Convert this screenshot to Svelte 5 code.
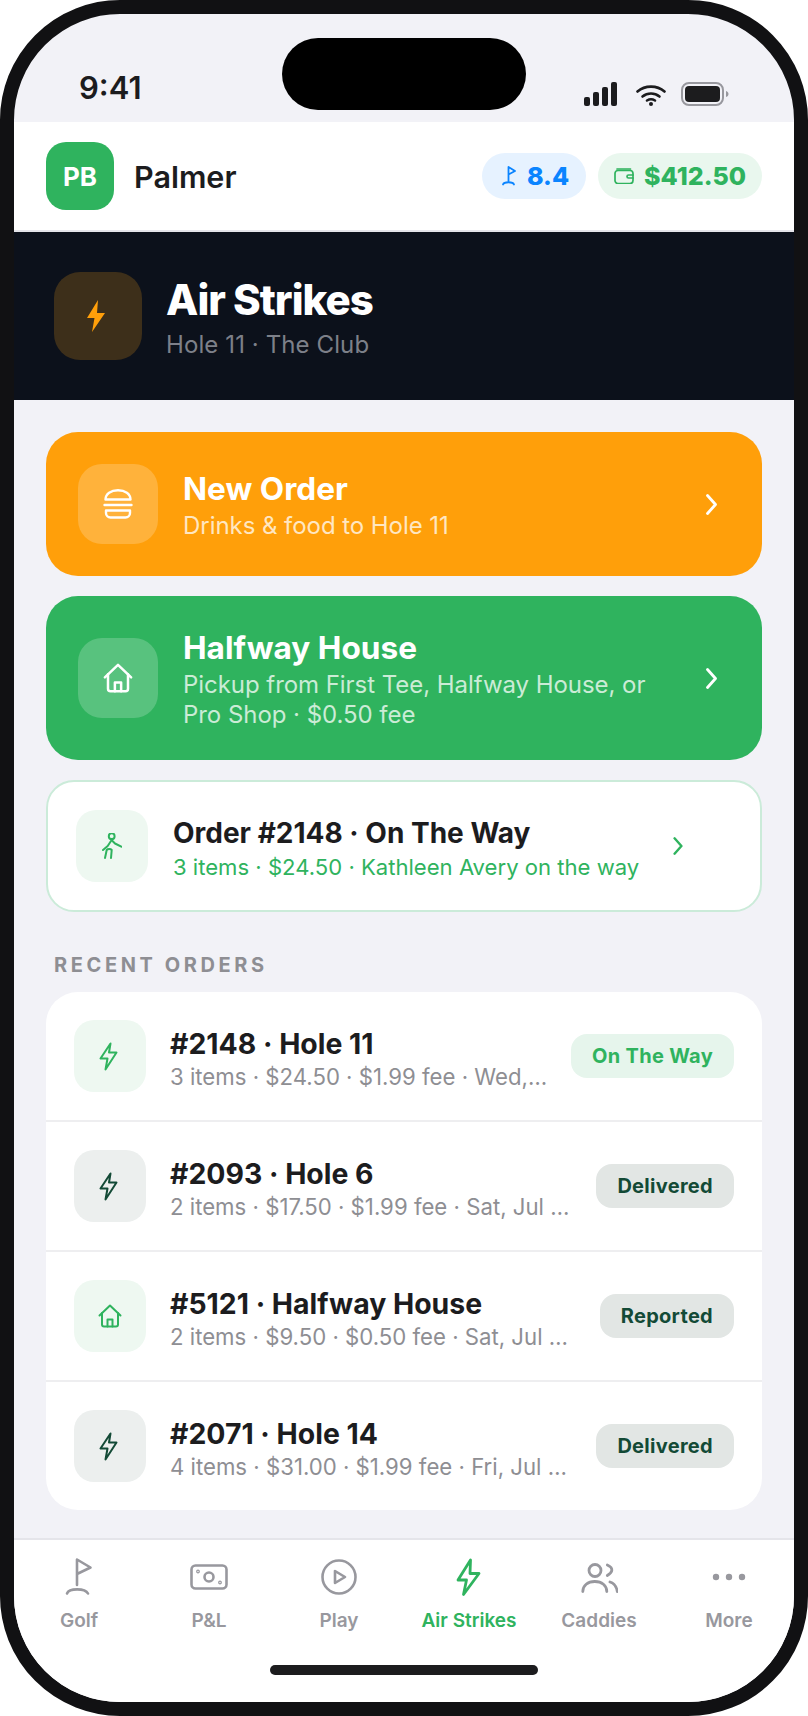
<script>
  const orders = [
    { id: '#2148 · Hole 11', meta: '3 items · $24.50 · $1.99 fee · Wed,…', status: 'On The Way', icon: 'bolt', active: true },
    { id: '#2093 · Hole 6', meta: '2 items · $17.50 · $1.99 fee · Sat, Jul …', status: 'Delivered', icon: 'bolt', active: false },
    { id: '#5121 · Halfway House', meta: '2 items · $9.50 · $0.50 fee · Sat, Jul …', status: 'Reported', icon: 'house', active: true },
    { id: '#2071 · Hole 14', meta: '4 items · $31.00 · $1.99 fee · Fri, Jul …', status: 'Delivered', icon: 'bolt', active: false }
  ];

  const tabs = [
    { label: 'Golf', icon: 'flag' },
    { label: 'P&L', icon: 'money' },
    { label: 'Play', icon: 'play' },
    { label: 'Air Strikes', icon: 'zap', active: true },
    { label: 'Caddies', icon: 'people' },
    { label: 'More', icon: 'dots' }
  ];
</script>

{#snippet house(size)}
  <svg width={size} height={size} viewBox="0 0 24 24" fill="none" stroke="currentColor" stroke-width="2" stroke-linecap="round" stroke-linejoin="round">
    <path d="M1.500 11.500 12 1.500l10.500 10" />
    <path d="M4 9v11.500a2 2 0 0 0 2 2h12a2 2 0 0 0 2-2V9" />
    <path d="M9.500 22.500V15.500h5v7" />
  </svg>
{/snippet}

{#snippet chevron(w, h)}
  <svg class="chev" width={w} height={h} viewBox="0 0 11 21" fill="none" stroke="currentColor" stroke-width="2.800" stroke-linecap="round" stroke-linejoin="round">
    <path d="M1.500 1.500 9.500 10.500 1.500 19.500" />
  </svg>
{/snippet}

<div class="phone">
  <div class="island"></div>

  <div class="status">
    <span class="time">9:41</span>
    <div class="status-icons">
      <svg width="33" height="24" viewBox="0 0 33 24" fill="#1c1c1e">
        <rect x="0" y="15" width="6" height="9" rx="2" />
        <rect x="9" y="10" width="6" height="14" rx="2" />
        <rect x="18" y="5" width="6" height="19" rx="2" />
        <rect x="27" y="0" width="6" height="24" rx="2" />
      </svg>
      <svg class="wifi" width="30" height="22" viewBox="0 0 30 22" fill="none" stroke="#1c1c1e" stroke-width="2.600" stroke-linecap="round">
        <path d="M1.500 7.500C9 1 21 1 28.500 7.500" />
        <path d="M6.500 12.500C11.500 8.500 18.500 8.500 23.500 12.500" />
        <path d="M11 16.500C13.500 15 16.500 15 19 16.500" />
        <circle cx="15" cy="20" r="2" fill="#1c1c1e" stroke="none" />
      </svg>
      <svg class="batt" width="48" height="24" viewBox="0 0 48 24">
        <rect x="1" y="1" width="41" height="22" rx="7" fill="none" stroke="#98989e" stroke-width="2" />
        <rect x="4" y="4" width="35" height="16" rx="4" fill="#1c1c1e" />
        <path d="M45 9c1.600 .5 2.500 1.500 2.500 3s-.9 2.500-2.500 3z" fill="#98989e" />
      </svg>
    </div>
  </div>

  <header class="topbar">
    <div class="avatar">PB</div>
    <span class="name">Palmer</span>
    <div class="pills">
      <div class="pill blue">
        <svg width="14" height="20" viewBox="0 0 14 20" fill="none" stroke="currentColor" stroke-width="1.800" stroke-linecap="round" stroke-linejoin="round">
          <path d="M6.500 15V1l6.500 4-6.500 3.500" />
          <path d="M1 18.500C2 15.500 11 15.500 12 18.500" />
        </svg>
        8.4
      </div>
      <div class="pill green">
        <svg width="20" height="16" viewBox="0 0 20 16" fill="none" stroke="currentColor" stroke-width="1.700" stroke-linecap="round" stroke-linejoin="round">
          <path d="M3 1h13.500" />
          <rect x="1" y="2.500" width="18" height="13" rx="3" />
          <path d="M19 7h-4.500a1.500 1.500 0 0 0 0 3H19" />
        </svg>
        $412.50
      </div>
    </div>
  </header>

  <section class="hero">
    <div class="hero-icon">
      <svg width="18" height="32" viewBox="0 0 18 32" fill="#ff9f0a">
        <path d="M11 0 0 18h7.500L5 32 18 13h-8z" />
      </svg>
    </div>
    <div class="hero-text">
      <h1>Air Strikes</h1>
      <p>Hole 11 · The Club</p>
    </div>
  </section>

  <main class="content">
    <div class="action orange">
      <div class="action-icon">
        <svg width="30" height="30" viewBox="0 0 30 30" fill="none" stroke="currentColor" stroke-width="2.400" stroke-linecap="round" stroke-linejoin="round">
          <path d="M2.500 10.500C2.500 4.500 8 1.300 15 1.300s12.500 3.200 12.500 9.200z" />
          <path d="M1.500 16h27" />
          <path d="M3 21.500h24v2.500a4.500 4.500 0 0 1-4.500 4.500h-15A4.500 4.500 0 0 1 3 24z" />
        </svg>
      </div>
      <div class="action-text">
        <div class="action-title">New Order</div>
        <div class="action-sub">Drinks &amp; food to Hole 11</div>
      </div>
      {@render chevron(11, 21)}
    </div>

    <div class="action leaf">
      <div class="action-icon">{@render house(30)}</div>
      <div class="action-text">
        <div class="action-title">Halfway House</div>
        <div class="action-sub">Pickup from First Tee, Halfway House, or<br />Pro Shop · $0.50 fee</div>
      </div>
      {@render chevron(11, 21)}
    </div>

    <div class="live">
      <div class="tile soft">
        <svg width="20" height="27" viewBox="0 0 20 27" fill="none" stroke="currentColor" stroke-width="2" stroke-linecap="round" stroke-linejoin="round">
          <circle cx="9.700" cy="3.200" r="2.900" />
          <path d="M10 6.500 5.700 13 1 17" />
          <path d="M10 7.500l3 3 6.300 3.200" />
          <path d="M3 25l1.700-8c1-1.200 4-1.200 5 0L9 25" />
        </svg>
      </div>
      <div class="live-text">
        <div class="live-title">Order #2148 · On The Way</div>
        <div class="live-sub">3 items · $24.50 · Kathleen Avery on the way</div>
      </div>
      {@render chevron(10, 18)}
    </div>

    <div class="section-label">RECENT ORDERS</div>

    <div class="orders">
      {#each orders as order}
        <div class="order">
          <div class="tile" class:soft={order.active} class:muted={!order.active}>
            {#if order.icon === 'house'}
              {@render house(24)}
            {:else}
              <svg class="bolt" width="19" height="29" viewBox="0 0 19 29" fill="none" stroke="currentColor" stroke-width="2" stroke-linejoin="round" stroke-linecap="round">
                <path d="M11.500 1.500 1.500 16.500h7L6.500 27.500 17.500 10.500h-7.500z" />
              </svg>
            {/if}
          </div>
          <div class="order-text">
            <div class="order-title">{order.id}</div>
            <div class="order-meta">{order.meta}</div>
          </div>
          <span class="badge" class:way={order.status === 'On The Way'}>{order.status}</span>
        </div>
      {/each}
    </div>
  </main>

  <nav class="tabbar">
    <div class="tabs">
      {#each tabs as tab}
        <div class="tab" class:active={tab.active}>
          <div class="tab-icon">
            {#if tab.icon === 'flag'}
              <svg width="28" height="38" viewBox="0 0 28 38" fill="none" stroke="currentColor" stroke-width="2.600" stroke-linecap="round" stroke-linejoin="round">
                <path d="M12 27V1.500l13.500 8L12 16" />
                <path d="M2 35.500C4 30 20 30 23 35.500" />
              </svg>
            {:else if tab.icon === 'money'}
              <svg width="38" height="26" viewBox="0 0 38 26" fill="none" stroke="currentColor" stroke-width="2.600" stroke-linecap="round">
                <rect x="1.500" y="1.500" width="35" height="23" rx="4" />
                <circle cx="19" cy="13" r="4.500" />
                <circle cx="8" cy="7.500" r=".6" />
                <circle cx="30" cy="18.500" r=".6" />
              </svg>
            {:else if tab.icon === 'play'}
              <svg width="36" height="36" viewBox="0 0 36 36" fill="none" stroke="currentColor" stroke-width="2.600" stroke-linejoin="round">
                <circle cx="18" cy="18" r="16.500" />
                <path d="M14 12v12l10-6z" />
              </svg>
            {:else if tab.icon === 'zap'}
              <svg width="26" height="40" viewBox="0 0 26 40" fill="none" stroke="currentColor" stroke-width="2.800" stroke-linejoin="round" stroke-linecap="round">
                <path d="M14.500 3 2 23h8.500L7.500 37.500 23 16.500H14z" />
              </svg>
            {:else if tab.icon === 'people'}
              <svg width="38" height="32" viewBox="0 0 38 32" fill="none" stroke="currentColor" stroke-width="2.800" stroke-linecap="round">
                <circle cx="15" cy="9.500" r="6" />
                <path d="M2.800 30.500c0-6 5-10 12-10s12 4 12 10" />
                <path d="M27.300 4c3.500 1.500 4.800 3.500 4.500 5.500-.3 2-2 3.500-4.500 5" />
                <path d="M30 21c3.500 1 6.500 5 7.300 9.500" />
              </svg>
            {:else}
              <svg width="34" height="8" viewBox="0 0 34 8" fill="currentColor">
                <circle cx="4" cy="4" r="3.200" />
                <circle cx="17" cy="4" r="3.200" />
                <circle cx="30" cy="4" r="3.200" />
              </svg>
            {/if}
          </div>
          <span>{tab.label}</span>
        </div>
      {/each}
    </div>
    <div class="home-bar"></div>
  </nav>
</div>

<style>
  :global(body) {
    margin: 0;
    background: #fff;
  }

  .phone {
    width: 808px;
    height: 1716px;
    box-sizing: border-box;
    border: 14px solid #111113;
    border-radius: 120px;
    overflow: hidden;
    position: relative;
    display: flex;
    flex-direction: column;
    background: #f2f2f7;
    font-family: Inter, "Noto Sans", sans-serif;
    color: #1c1c1e;
  }

  .island {
    position: absolute;
    top: 24px;
    left: 268px;
    width: 244px;
    height: 72px;
    border-radius: 36px;
    background: #000;
  }

  .status {
    height: 108px;
    flex: none;
    display: flex;
    justify-content: space-between;
    box-sizing: border-box;
    padding: 60px 65px 0 65px;
  }
  .time {
    font-size: 31px;
    font-weight: 600;
    line-height: 28px;
  }
  .status-icons {
    display: flex;
    align-items: flex-start;
    margin-top: 8px;
  }
  .wifi {
    margin: 2px 0 0 19px;
  }
  .batt {
    margin: 0 0 0 15px;
  }

  .topbar {
    flex: none;
    height: 110px;
    box-sizing: border-box;
    border-bottom: 2px solid #e5e5ea;
    background: #fff;
    display: flex;
    align-items: center;
    padding: 0 32px;
  }
  .avatar {
    width: 68px;
    height: 68px;
    border-radius: 20px;
    background: #2fb35e;
    color: #fff;
    display: flex;
    align-items: center;
    justify-content: center;
    font-size: 26px;
    font-weight: 700;
  }
  .name {
    margin-left: 20px;
    font-size: 30.500px;
    font-weight: 600;
  }
  .pills {
    margin-left: auto;
    display: flex;
    gap: 12px;
  }
  .pill {
    height: 46px;
    border-radius: 23px;
    display: flex;
    align-items: center;
    gap: 11px;
    padding: 0 17px 0 20px;
    font-size: 25px;
    font-weight: 800;
  }
  .pill.blue {
    background: #e6f2ff;
    color: #0a84ff;
  }
  .pill.green {
    background: #e9f7ee;
    color: #2fb35e;
    gap: 10px;
    padding: 0 16px;
  }

  .hero {
    flex: none;
    height: 168px;
    box-sizing: border-box;
    background: #0c111b;
    display: flex;
    align-items: center;
    gap: 24px;
    padding: 0 40px;
    color: #fff;
  }
  .hero-icon {
    width: 88px;
    height: 88px;
    border-radius: 26px;
    background: #3d2f1a;
    display: flex;
    align-items: center;
    justify-content: center;
  }
  .hero-icon svg {
    margin-right: 4px;
  }
  .hero-text {
    padding-top: 5px;
  }
  h1 {
    margin: 0;
    font-size: 42px;
    font-weight: 800;
    line-height: 46px;
    letter-spacing: -1px;
  }
  .hero p {
    margin: 7px 0 0;
    font-size: 24px;
    line-height: 30px;
    letter-spacing: 0.1px;
    color: #7d8089;
  }

  .content {
    flex: 1;
    display: flex;
    flex-direction: column;
    padding: 32px 32px 0;
  }

  .action {
    display: flex;
    align-items: center;
    border-radius: 32px;
    padding: 32px 45px 32px 32px;
    color: #fff;
    margin-bottom: 20px;
  }
  .orange {
    background: #ff9f0a;
  }
  .leaf {
    background: #2fb35e;
    padding-top: 30px;
    padding-bottom: 30px;
  }
  .action-icon {
    width: 80px;
    height: 80px;
    flex: none;
    border-radius: 24px;
    background: rgba(255, 255, 255, 0.2);
    display: flex;
    align-items: center;
    justify-content: center;
  }
  .action-text {
    flex: 1;
    margin-left: 25px;
    padding-top: 4px;
  }
  .action-title {
    font-size: 31.600px;
    font-weight: 700;
    line-height: 36px;
  }
  .action-sub {
    margin-top: 4px;
    font-size: 24px;
    line-height: 30px;
    letter-spacing: -0.05px;
    color: rgba(255, 255, 255, 0.75);
  }
  .chev {
    flex: none;
  }

  .live {
    display: flex;
    align-items: center;
    height: 132px;
    box-sizing: border-box;
    border: 2px solid #cbebd9;
    border-radius: 28px;
    background: #fff;
    padding: 0 77px 0 28px;
  }
  .live .chev {
    color: #2fb35e;
  }
  .live-text {
    flex: 1;
    margin-left: 25px;
    padding-top: 4px;
  }
  .live-title {
    font-size: 28px;
    font-weight: 700;
    line-height: 34px;
  }
  .live-sub {
    margin-top: 3px;
    font-size: 22.100px;
    line-height: 28px;
    color: #2fb35e;
  }

  .tile {
    width: 72px;
    height: 72px;
    flex: none;
    border-radius: 20px;
    display: flex;
    align-items: center;
    justify-content: center;
  }
  .soft {
    background: #eef8f1;
    color: #2fb35e;
  }
  .muted {
    background: #ecefee;
    color: #134a36;
  }
  .bolt {
    margin-right: 4px;
  }

  .section-label {
    margin: 41px 0 15px 8px;
    font-size: 20px;
    line-height: 24px;
    font-weight: 700;
    letter-spacing: 3.600px;
    color: #8e8e93;
  }

  .orders {
    background: #fff;
    border-radius: 32px;
    overflow: hidden;
  }
  .order {
    height: 130px;
    box-sizing: border-box;
    display: flex;
    align-items: center;
    padding: 0 28px;
    border-bottom: 2px solid #eeeef0;
  }
  .order:last-child {
    height: 128px;
    border-bottom: 0;
  }
  .order-text {
    flex: 1;
    min-width: 0;
    margin: 0 20px 0 24px;
    padding-top: 6px;
  }
  .order-title {
    font-size: 28.400px;
    font-weight: 700;
    line-height: 34px;
    white-space: nowrap;
  }
  .order-meta {
    margin-top: 2px;
    font-size: 22.200px;
    line-height: 28px;
    color: #8e8e93;
    white-space: nowrap;
  }
  .badge {
    flex: none;
    height: 44px;
    line-height: 44px;
    padding: 0 21px;
    border-radius: 16px;
    background: #e2e6e4;
    color: #134a36;
    font-size: 20px;
    font-weight: 700;
    letter-spacing: 0.3px;
  }
  .badge.way {
    background: #e6f5ec;
    color: #2fb35e;
  }

  .tabbar {
    flex: none;
    height: 164px;
    box-sizing: border-box;
    border-top: 2px solid #e5e5ea;
    background: #fff;
    display: flex;
    flex-direction: column;
    align-items: center;
  }
  .tabs {
    width: 100%;
    display: flex;
    padding-top: 16px;
  }
  .tab {
    flex: 1;
    display: flex;
    flex-direction: column;
    align-items: center;
    color: #98989e;
    font-size: 19px;
    font-weight: 600;
    line-height: 24px;
  }
  .tab.active {
    color: #2fb35e;
  }
  .tab-icon {
    height: 42px;
    display: flex;
    align-items: center;
    justify-content: center;
    margin-bottom: 11px;
  }
  .home-bar {
    width: 268px;
    height: 10px;
    border-radius: 5px;
    background: #1c1c1e;
    margin-top: 32px;
  }
</style>
